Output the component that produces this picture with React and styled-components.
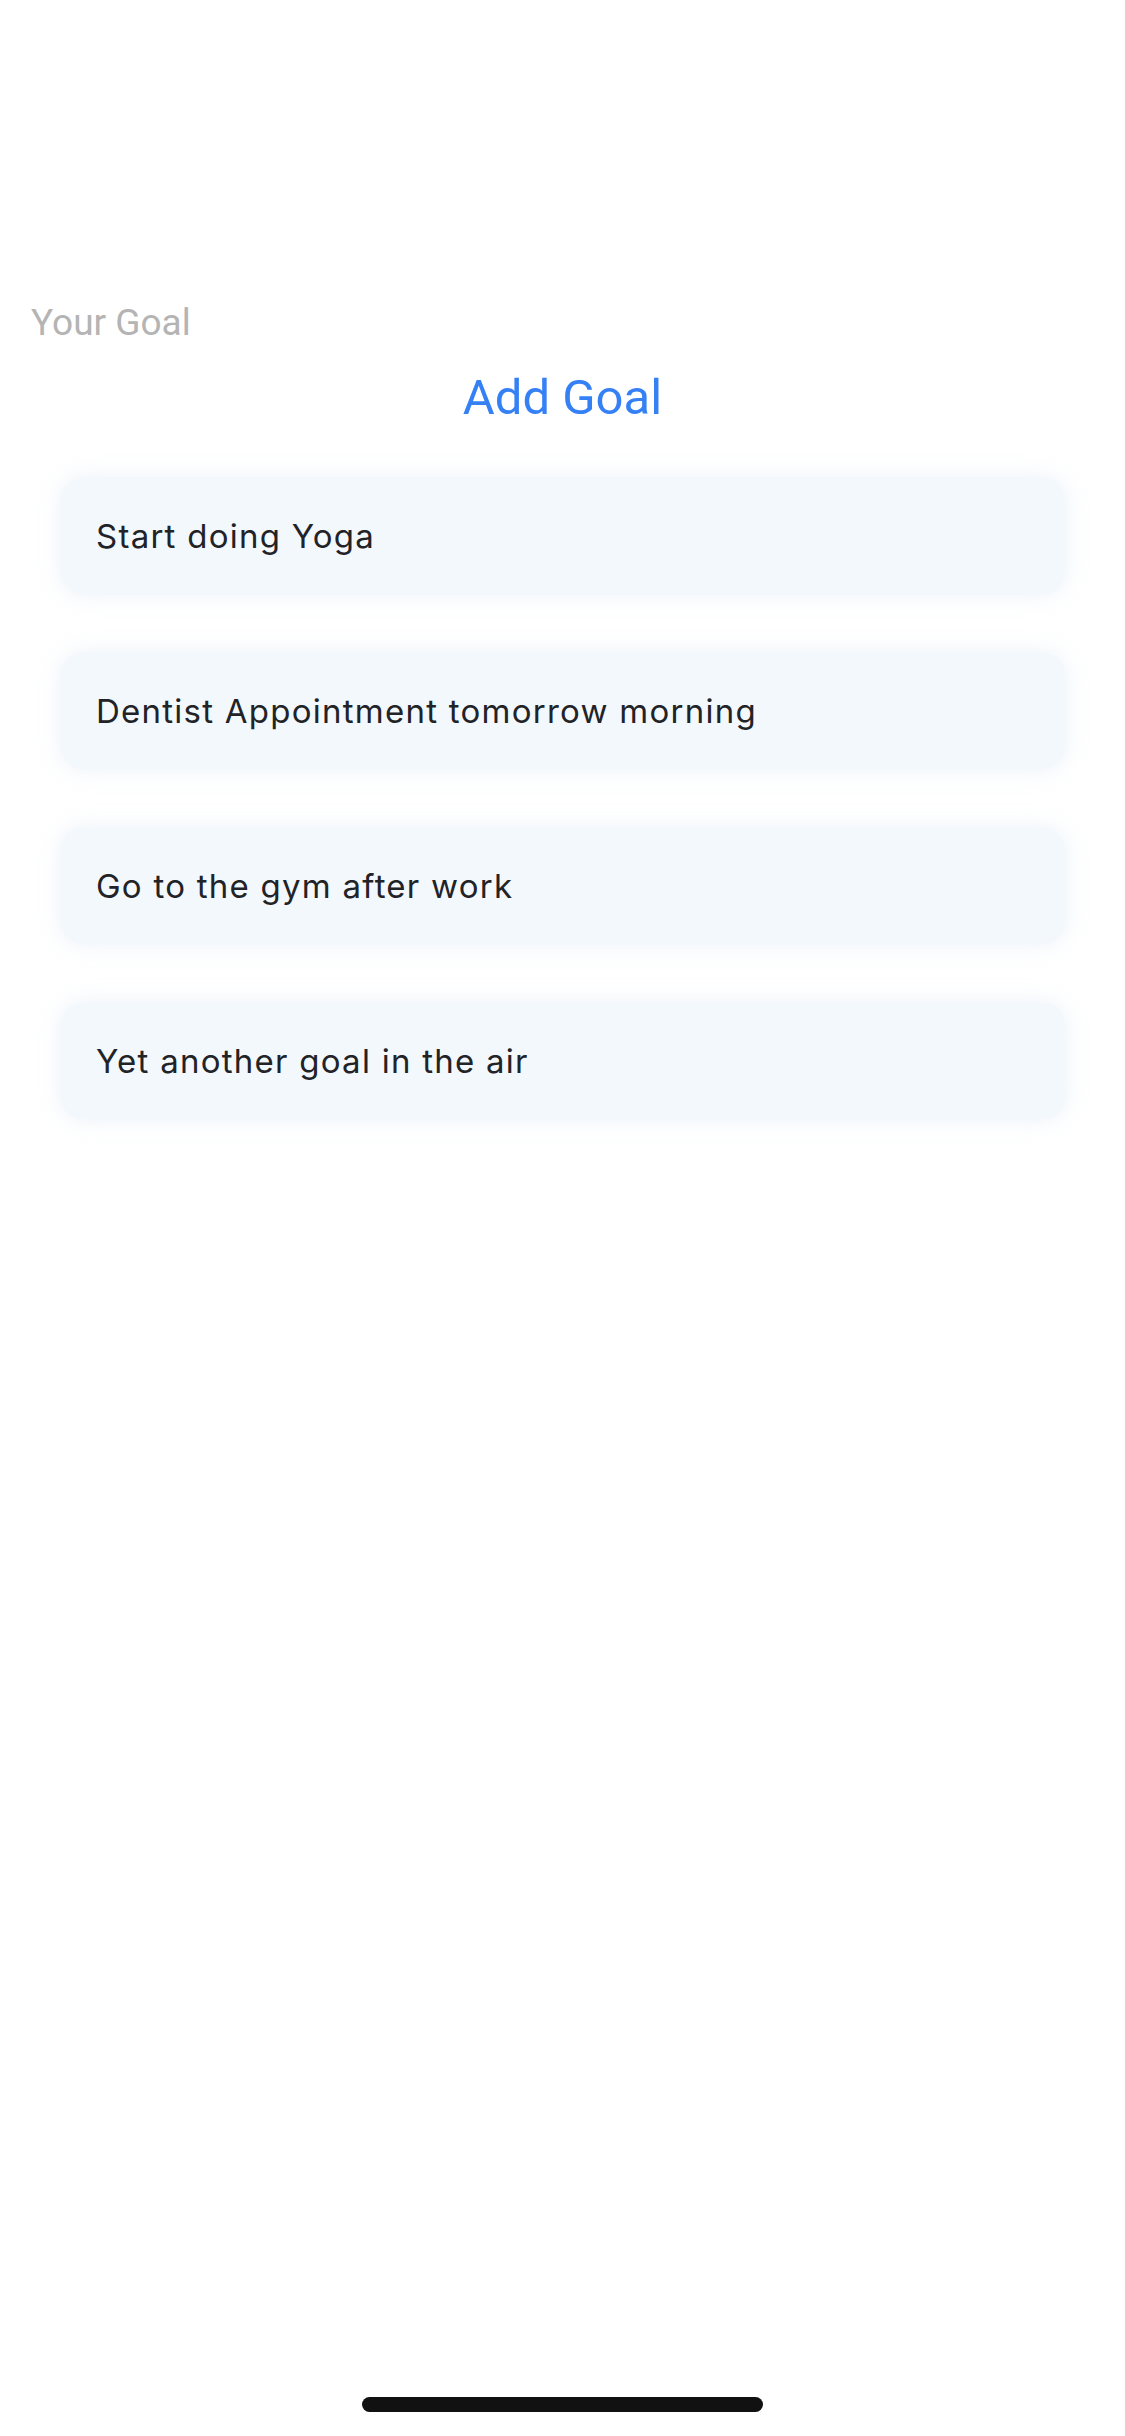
import React from 'react'
import styled, { createGlobalStyle } from 'styled-components'

const GlobalStyle = createGlobalStyle`
    html, body {
        margin: 0;
        padding: 0;
        background: #ffffff;
    }
`

const Screen = styled.div`
    width: 1125px;
    height: 2436px;
    display: flex;
    flex-direction: column;
    background: #ffffff;
    font-family: Roboto, "Noto Sans", sans-serif;
`

const Label = styled.div`
    margin: 299px 0 0 31px;
    font-size: 37px;
    line-height: 48px;
    color: #b4b4b4;
`

const AddButton = styled.div`
    align-self: center;
    margin-top: 21px;
    font-size: 49px;
    line-height: 60px;
    color: #3580f5;
`

const List = styled.div`
    display: flex;
    flex-direction: column;
    gap: 59px;
    margin: 50px 60px 0 61px;
`

const Card = styled.div`
    height: 116px;
    display: flex;
    align-items: center;
    padding-left: 35px;
    border-radius: 22px;
    background: #f3f8fd;
    box-shadow: 0 0 22px rgba(196, 214, 238, 0.35);
    font-family: Inter, "Noto Sans", sans-serif;
    font-size: 33px;
    letter-spacing: 1.25px;
    color: #222327;
`

const Spacer = styled.div`
    flex: 1;
`

const HomeBar = styled.div`
    align-self: center;
    width: 401px;
    height: 15px;
    border-radius: 8px;
    background: #111111;
    margin-bottom: 24px;
`

const goals = [
    'Start doing Yoga',
    'Dentist Appointment tomorrow morning',
    'Go to the gym after work',
    'Yet another goal in the air',
]

const App = () => {
  return (
    <Screen>
        <GlobalStyle />
        <Label>Your Goal</Label>
        <AddButton>Add Goal</AddButton>
        <List>
            {goals.map(g => <Card key={g}>{g}</Card>)}
        </List>
        <Spacer />
        <HomeBar />
    </Screen>
    )
}

export default App
